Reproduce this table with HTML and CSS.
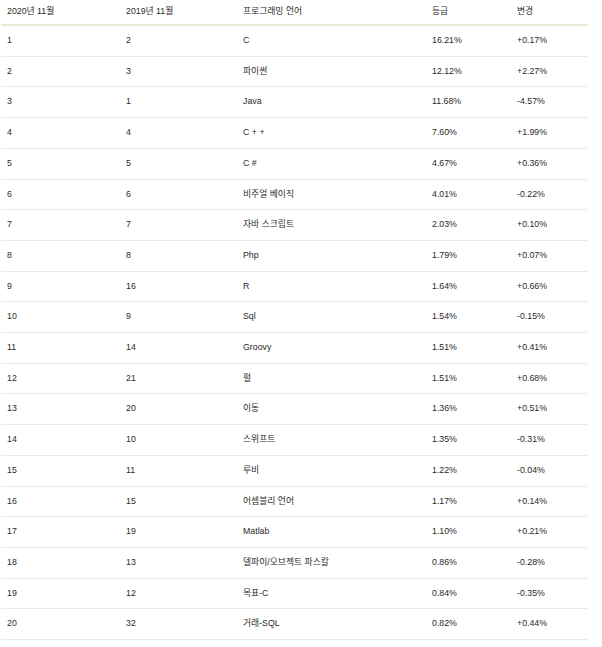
FILE: index.html
```html
<!DOCTYPE html>
<html lang="ko">
<head>
<meta charset="utf-8">
<title>TIOBE</title>
<link rel="stylesheet" href="styles.css">
</head>
<body>
<table class="rank">
<colgroup>
<col class="c1"><col class="c2"><col class="c3"><col class="c4"><col class="c5">
</colgroup>
<thead>
<tr><th>2020년 11월</th><th>2019년 11월</th><th>프로그래밍 언어</th><th>등급</th><th>변경</th></tr>
</thead>
<tbody>
<tr><td>1</td><td>2</td><td>C</td><td>16.21%</td><td>+0.17%</td></tr>
<tr><td>2</td><td>3</td><td>파이썬</td><td>12.12%</td><td>+2.27%</td></tr>
<tr><td>3</td><td>1</td><td>Java</td><td>11.68%</td><td>-4.57%</td></tr>
<tr><td>4</td><td>4</td><td>C + +</td><td>7.60%</td><td>+1.99%</td></tr>
<tr><td>5</td><td>5</td><td>C #</td><td>4.67%</td><td>+0.36%</td></tr>
<tr><td>6</td><td>6</td><td>비주얼 베이직</td><td>4.01%</td><td>-0.22%</td></tr>
<tr><td>7</td><td>7</td><td>자바 스크립트</td><td>2.03%</td><td>+0.10%</td></tr>
<tr><td>8</td><td>8</td><td>Php</td><td>1.79%</td><td>+0.07%</td></tr>
<tr><td>9</td><td>16</td><td>R</td><td>1.64%</td><td>+0.66%</td></tr>
<tr><td>10</td><td>9</td><td>Sql</td><td>1.54%</td><td>-0.15%</td></tr>
<tr><td>11</td><td>14</td><td>Groovy</td><td>1.51%</td><td>+0.41%</td></tr>
<tr><td>12</td><td>21</td><td>펄</td><td>1.51%</td><td>+0.68%</td></tr>
<tr><td>13</td><td>20</td><td>이동</td><td>1.36%</td><td>+0.51%</td></tr>
<tr><td>14</td><td>10</td><td>스위프트</td><td>1.35%</td><td>-0.31%</td></tr>
<tr><td>15</td><td>11</td><td>루비</td><td>1.22%</td><td>-0.04%</td></tr>
<tr><td>16</td><td>15</td><td>어셈블리 언어</td><td>1.17%</td><td>+0.14%</td></tr>
<tr><td>17</td><td>19</td><td>Matlab</td><td>1.10%</td><td>+0.21%</td></tr>
<tr><td>18</td><td>13</td><td>델파이/오브젝트 파스칼</td><td>0.86%</td><td>-0.28%</td></tr>
<tr><td>19</td><td>12</td><td>목표-C</td><td>0.84%</td><td>-0.35%</td></tr>
<tr><td>20</td><td>32</td><td>거래-SQL</td><td>0.82%</td><td>+0.44%</td></tr>
</tbody>
</table>
</body>
</html>
```
FILE: styles.css
```css
html, body {
  margin: 0;
  padding: 0;
  background: #ffffff;
}
body {
  font-family: "Liberation Sans", Arial, "Noto Sans CJK KR", sans-serif;
  font-size: 8.8px;
  color: #2a2a2a;
}
.rank {
  margin-left: 1px;
  width: 587px;
  border-collapse: collapse;
  table-layout: fixed;
}
.c1 { width: 119px; }
.c2 { width: 117px; }
.c3 { width: 189px; }
.c4 { width: 85px; }
.c5 { width: 77px; }
.rank th {
  font-weight: normal;
  text-align: left;
  padding: 4px 6px 6px 6px;
  line-height: 14px;
  border-bottom: 2px solid #ece7d7;
}
.rank td {
  text-align: left;
  padding: 8px 6px;
  line-height: 13.7px;
  border-bottom: 1px solid #eeeadd;
  white-space: nowrap;
}
```
